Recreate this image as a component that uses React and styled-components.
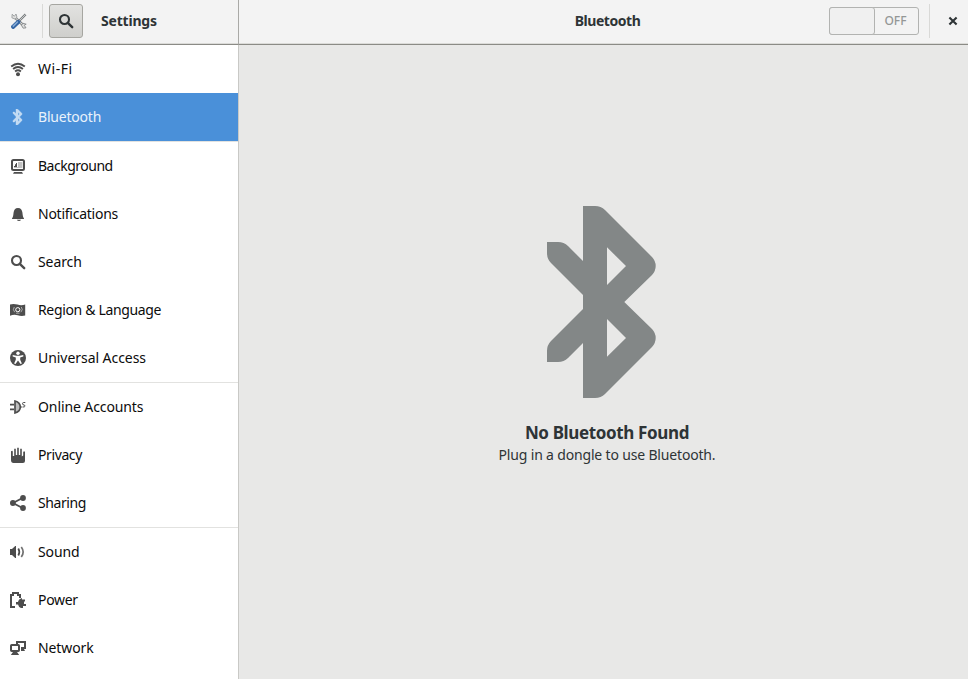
import styled, { createGlobalStyle } from "styled-components";

const GlobalStyle = createGlobalStyle`
  * {
    box-sizing: border-box;
  }
  body {
    margin: 0;
    overflow: hidden;
    font-family: "Noto Sans", "Open Sans", sans-serif;
    font-size: 14px;
    color: #2e3436;
  }
`;

const Window = styled.div`
  display: grid;
  grid-template-columns: 239px 1fr;
  grid-template-rows: 45px 1fr;
  width: 968px;
  height: 679px;
  background: #e8e8e7;
`;

const HeaderBar = styled.header`
  display: flex;
  align-items: flex-start;
  height: 45px;
  background: #f3f3f3;
  border-bottom: 1px solid #8b8b86;
  box-shadow: inset 0 -1px #dbdbd8;
`;

const SideHeader = styled(HeaderBar)`
  padding: 4px 0 0 11px;
  border-right: 1px solid #a9a9a6;
`;

const MainHeader = styled(HeaderBar)`
  display: grid;
  grid-template-columns: 1fr auto 1fr;
  padding: 4px 0 0 8px;
`;

const HeaderTitle = styled.h1`
  margin: 0;
  font-size: 14px;
  font-weight: 700;
  line-height: 34px;
  letter-spacing: ${(props) => props.$spacing}px;
`;

const ToolsIcon = styled.svg`
  width: 16px;
  height: 16px;
  margin: 9px 15px 0 0;
`;

const Divider = styled.div`
  width: 1px;
  height: 34px;
  background: #d9d9d7;
`;

const SearchButton = styled.button`
  display: flex;
  align-items: center;
  justify-content: center;
  width: 34px;
  height: 34px;
  margin: 0 18px 0 6px;
  padding: 0;
  color: #2e3436;
  background: linear-gradient(#e2e2e0, #cfcfcc);
  border: 1px solid #a6a6a1;
  border-radius: 3px;
`;

const Controls = styled.div`
  display: flex;
  justify-content: flex-end;
`;

const Switch = styled.button`
  display: grid;
  grid-template-columns: 45px 1fr;
  width: 90px;
  height: 28px;
  margin: 3px 10px 0 0;
  padding: 0;
  background: #f3f3f3;
  border: 1px solid #b2b3b1;
  border-radius: 3px;
`;

const SwitchKnob = styled.span`
  margin: -1px 0 -1px -1px;
  background: #f0f0f0;
  border: 1px solid #b2b3b1;
  border-radius: 3px;
`;

const SwitchLabel = styled.span`
  padding-right: 2px;
  font: 500 12px/26px "Noto Sans", sans-serif;
  color: #949796;
`;

const CloseButton = styled.button`
  display: flex;
  align-items: center;
  justify-content: center;
  width: 38px;
  height: 34px;
  padding: 0 0 0 8px;
  color: #2e3436;
  background: none;
  border: 0;
`;

const Sidebar = styled.nav`
  background: #fff;
  border-right: 1px solid #c9c9c6;
`;

const Item = styled.a`
  display: flex;
  align-items: center;
  gap: 12px;
  height: 48px;
  padding-left: 10px;
  color: ${(props) => (props.$active ? "#e9f2fb" : "#0c0c0c")};
  background: ${(props) => (props.$active ? "#4a90d9" : "#fff")};

  svg {
    color: ${(props) => (props.$active ? "#c3dbf3" : "#4d4d4d")};
  }
`;

const Label = styled.span`
  padding-bottom: 2px;
  letter-spacing: ${(props) => props.$spacing}px;
  white-space: nowrap;
`;

const Separator = styled.div`
  height: 1px;
  background: #e2e2e0;
`;

const Glyph = styled.svg`
  flex: none;
  width: ${(props) => props.$size || 16}px;
  height: ${(props) => props.$size || 16}px;
  fill: currentColor;
`;

const Panel = styled.main`
  display: flex;
  flex-direction: column;
  align-items: center;
  padding: 161px 0 0 7px;
  color: #2e3436;

  svg {
    color: #838787;
  }
`;

const PanelTitle = styled.h2`
  margin: 23px 0 0;
  font-size: 17px;
  font-weight: 700;
  line-height: 24px;
  letter-spacing: -0.36px;
`;

const PanelText = styled.p`
  margin: 0;
  line-height: 20px;
  letter-spacing: -0.17px;
`;

const BluetoothIcon = ({ size }) => (
  <Glyph $size={size} viewBox="0 0 192 192">
    <path
      fillRule="evenodd"
      stroke="currentColor"
      strokeWidth={size ? 0 : 5}
      d="M72 0H84Q90 0 94 4L141 51Q144.7 55 144.7 60T141 69L113.3 96L141 123Q144.7 127 144.7 132T141 141L94 188Q90 192 84 192H72V137L57 152Q53 156 47 156H36V145Q36 139 40 135L72 103V89L40 57Q36 53 36 47V36H47Q53 36 57 40L72 55ZM96 41.3V79L115 60ZM96 113V150.7L115 132Z"
    />
  </Glyph>
);

const SearchIcon = () => (
  <Glyph viewBox="0 0 16 16">
    <circle cx="6.5" cy="6.5" r="4.5" fill="none" stroke="currentColor" strokeWidth="2.1" />
    <path d="M9.8 9.8L14.2 14.2" stroke="currentColor" strokeWidth="2.4" strokeLinecap="round" />
  </Glyph>
);

const WifiIcon = () => (
  <Glyph viewBox="0 0 16 16">
    <g fill="none" stroke="currentColor" strokeWidth="1.9">
      <path d="M1.2 5.5Q8 0 14.8 5.5" />
      <path d="M3.1 8Q8 4 12.9 8" />
      <path d="M5.1 10.4Q8 8 10.9 10.4" />
    </g>
    <circle cx="8" cy="13.2" r="2" />
  </Glyph>
);

const BackgroundIcon = () => (
  <Glyph viewBox="0 0 16 16">
    <rect x="2" y="2" width="12" height="10" rx="1.5" fill="none" stroke="currentColor" strokeWidth="2" />
    <path d="M4 14H12L13 15.8H3Z" />
    <path d="M4 8H5V6.3H6V5H7V9H4Z" />
    <path d="M8 4H12.5V10H4V9H8Z" opacity=".35" />
  </Glyph>
);

const BellIcon = () => (
  <Glyph viewBox="0 0 16 16">
    <path d="M8 2C10.8 2 12 4 12.4 6.5C12.8 9.5 12.8 11 14 12.4V13H2V12.4C3.2 11 3.2 9.5 3.6 6.5C4 4 5.2 2 8 2Z" />
    <path d="M6.8 13.8H11Q10.5 15 9 15T6.8 13.8Z" />
  </Glyph>
);

const FlagIcon = () => (
  <Glyph viewBox="0 0 16 16">
    <path d="M0 2.5Q3.5 1.3 7.5 2.6T15.2 2.4V13.5Q11.5 14.4 7.7 13.3T0 13.8Z" />
    <circle cx="7.8" cy="7.7" r="2.1" fill="none" stroke="#fff" strokeWidth="1" />
    <path d="M4.3 5Q2.2 7.5 4.7 10.2M11.3 5Q13.4 7.5 10.9 10.2M6 11.2H9.6" fill="none" stroke="#fff" strokeWidth=".8" opacity=".65" />
  </Glyph>
);

const AccessIcon = () => (
  <Glyph viewBox="0 0 16 16">
    <circle cx="8" cy="8" r="8" />
    <circle cx="8" cy="3.3" r="1.7" fill="#fff" />
    <path d="M2.7 5L6.3 5.7H9.7L13.3 5V6.5L10.2 7.5V9.7L11.9 13.5L10.5 14L8 10.5L5.5 14L4.1 13.5L5.8 9.7V7.5L2.7 6.5Z" fill="#fff" />
  </Glyph>
);

const AccountsIcon = () => (
  <Glyph viewBox="0 0 16 16">
    <path d="M0 4.8H4V6.6H0ZM0 9.4H4V11.2H0Z" />
    <path d="M5 2Q10.3 3.5 10.3 8T5 14Z" fill="#bdbdbd" stroke="currentColor" strokeWidth="1.7" />
    <path d="M10.5 8H12M15.3 3.5H13.7Q12.5 3.5 12.5 4.7T14 6Q15.2 6.2 15 7.2T12.5 8" fill="none" stroke="currentColor" strokeWidth="1" />
  </Glyph>
);

const HandIcon = () => (
  <Glyph viewBox="0 0 16 16">
    <path d="M1 4.3Q2.8 3 2.8 5V9H4.2V2Q5 .8 5.8 2V8H7.2V1Q8 0 8.8 1V8H10.2V2Q11 .8 11.8 2V9.5L13.2 8.5V5Q14.2 3.7 15 5V14Q15 16 13 16H3.5Q1 16 1 13Z" />
  </Glyph>
);

const ShareIcon = () => (
  <Glyph viewBox="0 0 16 16">
    <path d="M13 2.8L3 8L13 13.2" fill="none" stroke="currentColor" strokeWidth="1.8" />
    <circle cx="2.9" cy="8" r="2.9" />
    <circle cx="13" cy="3" r="2.9" />
    <circle cx="13" cy="13" r="2.9" />
  </Glyph>
);

const SoundIcon = () => (
  <Glyph viewBox="0 0 16 16">
    <path d="M0 5H2L5.2 2H6V14H5.2L2 11H0Z" />
    <path d="M8.3 4.5Q10.4 8 8.3 11.5" fill="none" stroke="currentColor" strokeWidth="1.7" />
    <path d="M11.3 3Q15 8 11.3 13" fill="none" stroke="currentColor" strokeWidth="1.7" opacity=".8" />
  </Glyph>
);

const PowerIcon = () => (
  <Glyph viewBox="0 0 16 16">
    <path d="M5 15H1V3H3V1H8V3H10V6" fill="none" stroke="currentColor" strokeWidth="2" />
    <path d="M12 6V7.5H15V9.5H14V12H16V14H13V16H11Q8.5 15 8 12.5H6V10H8Q8.5 7 12 6Z" />
  </Glyph>
);

const NetworkIcon = () => (
  <Glyph viewBox="0 0 16 16">
    <rect x="1" y="5" width="8" height="6" rx=".7" fill="none" stroke="currentColor" strokeWidth="2" />
    <path d="M3 12H7L9.2 14.9H.8Z" />
    <path d="M7 4V2H15V8H11" fill="none" stroke="currentColor" strokeWidth="2" />
    <path d="M11 8H13.5L15 11H11Z" />
  </Glyph>
);

// crossed wrench and screwdriver
const SettingsLogo = () => (
  <ToolsIcon viewBox="0 0 16 16">
    <path d="M4.5 5L12.5 12.5" stroke="#85888a" strokeWidth="2.8" />
    <path d="M4.5 5L12.5 12.5" stroke="#e4e5e5" strokeWidth="1" />
    <path d="M1.2 1.2L3.3 3.3L5 1L6 4.2L4 6L.9 4.8Z" fill="#e0e0df" stroke="#999c9d" strokeWidth=".9" />
    <path d="M10.4 12.2L12 10.3L15.2 11.2L13.2 12.3L15 14.8L12.2 15.2Z" fill="#e0e0df" stroke="#85888a" strokeWidth=".9" />
    <path d="M7.5 8.5L14.6 1.4" stroke="#777b7d" strokeWidth="2.3" />
    <path d="M7.5 8.5L14.6 1.4" stroke="#d0d2d2" strokeWidth=".9" />
    <path d="M2.2 13.8L7.2 9" stroke="#3465a4" strokeWidth="4.2" strokeLinecap="round" />
    <path d="M2.2 13.1L6.4 9" stroke="#86acd6" strokeWidth="1.5" strokeLinecap="round" />
  </ToolsIcon>
);

const GROUPS = [
  [
    { name: "Wi-Fi", Icon: WifiIcon, spacing: 0.5 },
    { name: "Bluetooth", Icon: BluetoothIcon, spacing: -0.2, active: true },
  ],
  [
    { name: "Background", Icon: BackgroundIcon, spacing: -0.5 },
    { name: "Notifications", Icon: BellIcon, spacing: -0.25 },
    { name: "Search", Icon: SearchIcon },
    { name: "Region & Language", Icon: FlagIcon, spacing: -0.34 },
    { name: "Universal Access", Icon: AccessIcon, spacing: -0.05 },
  ],
  [
    { name: "Online Accounts", Icon: AccountsIcon },
    { name: "Privacy", Icon: HandIcon, spacing: -0.4 },
    { name: "Sharing", Icon: ShareIcon, spacing: -0.4 },
  ],
  [
    { name: "Sound", Icon: SoundIcon },
    { name: "Power", Icon: PowerIcon, spacing: -0.3 },
    { name: "Network", Icon: NetworkIcon },
  ],
];

const Group = ({ items, first }) => (
  <>
    {!first && <Separator />}
    {items.map(({ name, Icon, active, spacing = -0.1 }) => (
      <Item key={name} $active={active}>
        <Icon />
        <Label $spacing={spacing}>{name}</Label>
      </Item>
    ))}
  </>
);

export default function App() {
  return (
    <Window>
      <GlobalStyle />
      <SideHeader>
        <SettingsLogo />
        <Divider />
        <SearchButton aria-label="Search">
          <SearchIcon />
        </SearchButton>
        <HeaderTitle $spacing={-0.2}>Settings</HeaderTitle>
      </SideHeader>
      <MainHeader>
        <span />
        <HeaderTitle $spacing={-0.45}>Bluetooth</HeaderTitle>
        <Controls>
          <Switch>
            <SwitchKnob />
            <SwitchLabel>OFF</SwitchLabel>
          </Switch>
          <Divider />
          <CloseButton aria-label="Close">
            <Glyph viewBox="0 0 16 16">
              <path d="M4.4 4.4L11.6 11.6M11.6 4.4L4.4 11.6" stroke="currentColor" strokeWidth="2.1" />
            </Glyph>
          </CloseButton>
        </Controls>
      </MainHeader>
      <Sidebar>
        {GROUPS.map((items, i) => (
          <Group key={items[0].name} items={items} first={i === 0} />
        ))}
      </Sidebar>
      <Panel>
        <BluetoothIcon size={192} />
        <PanelTitle>No Bluetooth Found</PanelTitle>
        <PanelText>Plug in a dongle to use Bluetooth.</PanelText>
      </Panel>
    </Window>
  );
}
